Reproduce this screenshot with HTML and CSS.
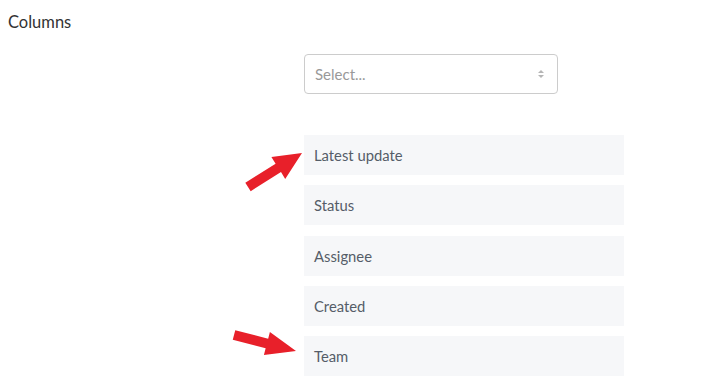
FILE: index.html
```html
<!DOCTYPE html>
<html lang="en">

<head>
  <meta charset="UTF-8">
  <meta name="viewport" content="width=device-width, initial-scale=1">
  <title>Columns</title>
  <link rel="stylesheet" href="styles.css">
</head>

<body>
  <div class="page">
    <div class="titulo">Columns</div>
    <div class="campo">
      <div class="vazio"></div>
      <div class="conteudo">
        <div class="select">
          <span>Select...</span>
          <svg class="caret" width="8" height="10" viewBox="0 0 8 10">
            <polygon points="4,1 7,4 1,4" fill="#b5b5b5"/>
            <polygon points="4,9 7,6 1,6" fill="#b5b5b5"/>
          </svg>
        </div>
        <ul class="lista">
          <li>Latest update</li>
          <li>Status</li>
          <li>Assignee</li>
          <li>Created</li>
          <li>Team</li>
        </ul>
      </div>
    </div>

    <!-- setas de anotação -->
    <svg class="setas" width="710" height="392" viewBox="0 0 710 392">
      <polygon fill="#e8202a" points="250.7,191.2 281.0,172.1 285.2,178.9 302,153 271.4,156.9 275.6,163.7 245.3,182.8"/>
      <polygon fill="#e8202a" points="232.75,339.8 265.65,348.3 263.9,355.1 296,351 269.9,331.9 268.15,338.7 235.25,330.2"/>
    </svg>
  </div>
</body>

</html>
```

FILE: styles.css
```css
body {
  margin: 0px;
  background-color: #FFFFFF;
  font-family: Lato, "Open Sans", sans-serif;
}

.page {
  position: relative;
  width: 710px;
  height: 392px;
  overflow: hidden;
}

.titulo {
  padding: 12px 0 0 8px;
  font-size: 16.5px;
  line-height: 21px;
  color: #333333;
}

.campo {
  display: grid;
  grid-template-columns: 304px 320px;
  margin-top: 21px;
}

.select {
  width: 254px;
  height: 40px;
  box-sizing: border-box;
  border: 1px solid #cccccc;
  border-radius: 4px;
  display: flex;
  align-items: center;
  justify-content: space-between;
  padding: 0 12px 0 10px;
  font-size: 15px;
  color: #999999;
}

.caret {
  display: block;
}

.lista {
  list-style: none;
  margin: 41px 0 0 0;
  padding: 0;
}

.lista li {
  height: 40px;
  line-height: 40px;
  margin-bottom: 10.3px;
  padding-left: 10px;
  background-color: #f6f7f9;
  font-size: 14.8px;
  color: #555d68;
}

.setas {
  position: absolute;
  left: 0;
  top: 0;
  pointer-events: none;
}
```
